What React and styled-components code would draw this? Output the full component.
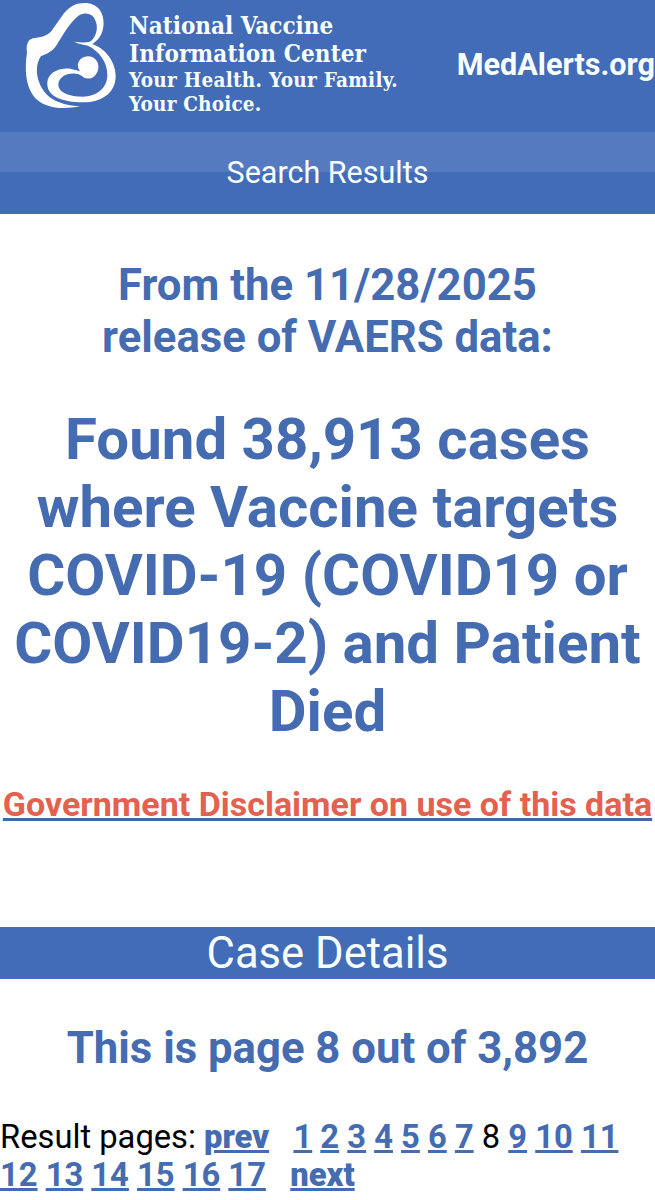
import styled, { createGlobalStyle } from 'styled-components';

const Colors = {
  BLUE: '#426bb8',
  LIGHT_BLUE: '#567ac0',
  LINK: '#456bb1',
  UNDERLINE: '#426a9f',
  RED: '#e4604f',
  WHITE: '#f8ffff',
};

const GlobalStyle = createGlobalStyle`
  body {
    margin: 0;
    background: #fff;
    font-family: Roboto, sans-serif;
    overflow-x: hidden;
  }
`;

const Header = styled.header`
  display: flex;
  height: 132px;
  background: ${Colors.BLUE};
  color: ${Colors.WHITE};
`;

const Logo = styled.svg`
  flex: none;
  width: 93px;
  height: 109px;
  margin: 1px 11px 0 25px;
`;

const Organization = styled.div`
  flex: 1;
  padding-top: 12px;
  font-family: 'DejaVu Serif Condensed', 'DejaVu Serif', serif;
  font-stretch: condensed;
  font-weight: bold;
  white-space: nowrap;
`;

const OrganizationLine = styled.div`
  font-size: ${({ $small }) => ($small ? 20.5 : 24)}px;
  line-height: ${({ $small }) => ($small ? 24 : 28)}px;
  letter-spacing: ${({ $spacing }) => $spacing || 0}px;
`;

const SiteName = styled.div`
  padding-top: 47px;
  font-size: 30.6px;
  font-weight: bold;
  line-height: 36px;
`;

const SearchBar = styled.div`
  display: flex;
  justify-content: center;
  height: 82px;
  box-sizing: border-box;
  padding-top: 23px;
  background: linear-gradient(${Colors.LIGHT_BLUE} 40px, ${Colors.BLUE} 40px);
  color: ${Colors.WHITE};
  font-size: 30.5px;
  line-height: 36px;
`;

const Heading = styled.h2`
  margin: ${({ $top }) => $top}px 0 0;
  color: ${Colors.LINK};
  font-size: 43.7px;
  line-height: 52px;
  text-align: center;
`;

const ResultTitle = styled.h1`
  margin: 42px 0 0;
  color: ${Colors.LINK};
  font-size: 58.2px;
  line-height: 68px;
  text-align: center;
  white-space: nowrap;
`;

const Disclaimer = styled.div`
  margin-top: 39px;
  text-align: center;
  white-space: nowrap;
  font-size: 34px;
  font-weight: bold;
  line-height: 40px;

  a {
    color: ${Colors.RED};
    text-decoration: underline ${Colors.UNDERLINE} 3px;
    text-underline-offset: 2px;
    text-decoration-skip-ink: none;
  }
`;

const SectionBar = styled.div`
  height: 52px;
  margin-top: 103px;
  background: ${Colors.BLUE};
  color: ${Colors.WHITE};
  font-size: 43.6px;
  line-height: 54px;
  text-align: center;
`;

const Pages = styled.div`
  margin-top: 44px;
  color: #000;
  font-size: 32.72px;
  line-height: 38px;
  white-space: nowrap;
`;

const PageLink = styled.a`
  color: ${Colors.LINK};
  font-weight: ${({ $heavy }) => ($heavy ? 900 : 700)};
  text-decoration: underline ${Colors.LINK} 3px;
  text-underline-offset: 2px;
`;

const pageList = [1, 2, 3, 4, 5, 6, 7, 8, 9, 10, 11];
const secondPageList = [12, 13, 14, 15, 16, 17];
const CURRENT_PAGE = 8;

const PageNumbers = ({ pages }) =>
  pages.map(page => (
    <span key={page}>
      {page === CURRENT_PAGE ? page : <PageLink href="#">{page}</PageLink>}{' '}
    </span>
  ));

const MotherLogo = () => (
  <Logo viewBox="75 3 279 327" fill="#fff">
    <path d="M222 125C246 128 263 129 272 124C292 106 297 75 281 52C269 37 246 38 232 50C205 73 187 108 170 135C158 154 142 162 123 168C107 190 108 224 118 248C133 288 168 314 240 319C190 329 130 327 100 287C72 250 76 190 81 158C77 133 85 115 104 114C132 111 147 105 158 88L192 40C213 14 235 7 260 9C301 13 314 47 310 80C307 105 295 119 277 132C315 145 348 185 347 230C346 281 301 308 248 307C190 306 142 291 142 252C142 216 178 204 211 206L241 214C229 204 231 179 252 171C275 162 297 179 295 203C293 229 270 243 250 232C237 219 218 219 202 223C187 227 175 240 175 255C176 279 211 290 247 290C291 289 321 264 322 227C323 188 299 154 264 137C251 133 236 132 222 125Z" />
  </Logo>
);

export default function App() {
  return (
    <>
      <GlobalStyle />
      <Header>
        <MotherLogo />
        <Organization>
          <OrganizationLine>National Vaccine</OrganizationLine>
          <OrganizationLine $spacing={0.1}>Information Center</OrganizationLine>
          <OrganizationLine $small $spacing={0.3}>
            Your Health. Your Family.
          </OrganizationLine>
          <OrganizationLine $small $spacing={0.2}>
            Your Choice.
          </OrganizationLine>
        </Organization>
        <SiteName>MedAlerts.org</SiteName>
      </Header>
      <SearchBar>Search Results</SearchBar>
      <Heading $top={45}>
        From the 11/28/2025
        <br />
        release of VAERS data:
      </Heading>
      <ResultTitle>
        Found 38,913 cases
        <br />
        where Vaccine targets
        <br />
        COVID-19 (COVID19 or
        <br />
        COVID19-2) and Patient
        <br />
        Died
      </ResultTitle>
      <Disclaimer>
        <a href="#">Government Disclaimer on use of this data</a>
      </Disclaimer>
      <SectionBar>Case Details</SectionBar>
      <Heading $top={43}>This is page 8 out of 3,892</Heading>
      <Pages>
        Result pages:{' '}
        <PageLink href="#" $heavy>
          prev
        </PageLink>
        &nbsp;&nbsp; <PageNumbers pages={pageList} />
        <br />
        <PageNumbers pages={secondPageList} />
        &nbsp;&nbsp;
        <PageLink href="#" $heavy>
          next
        </PageLink>
      </Pages>
    </>
  );
}
